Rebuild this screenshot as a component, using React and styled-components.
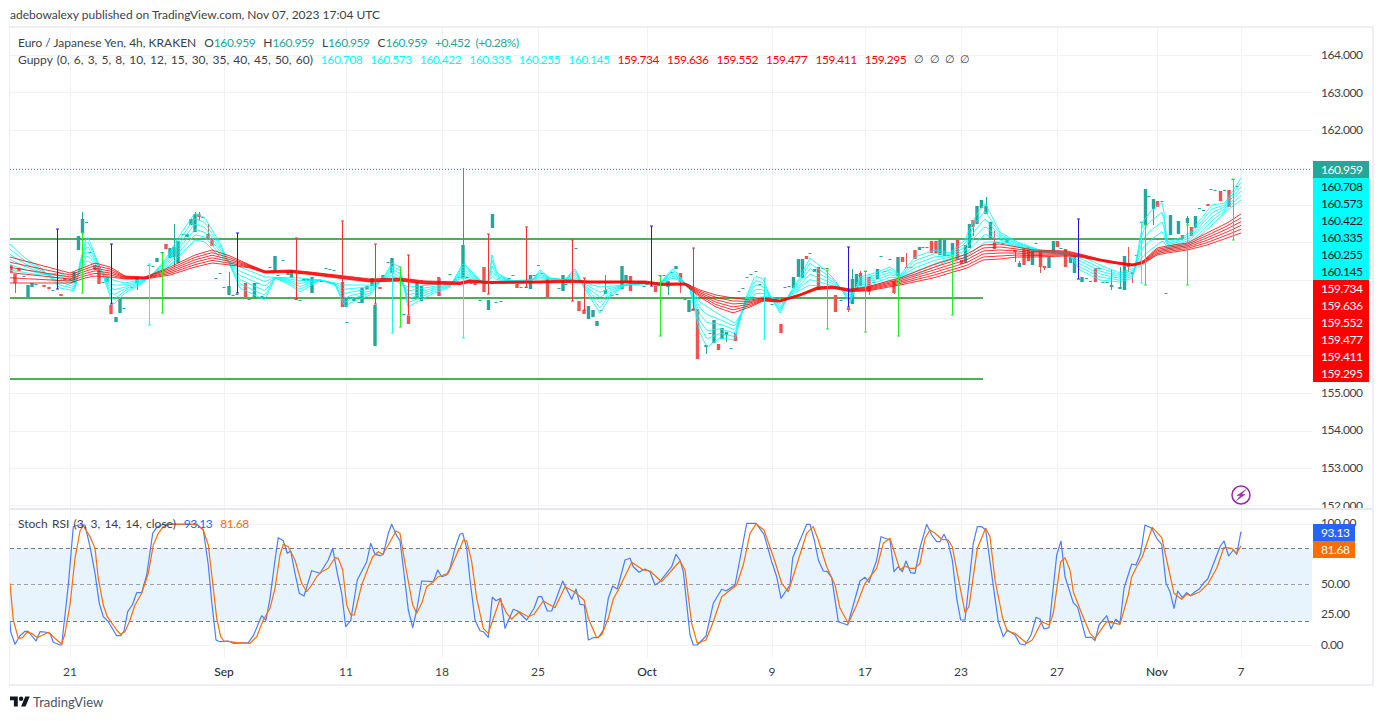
import React from "react";
import styled, { createGlobalStyle } from "styled-components";

const TEAL = "#26a69a";
const RED = "#ef5350";
const GRID = "#f0f2f6";

const GlobalStyle = createGlobalStyle`
  html, body {
    margin: 0;
    background: #fff;
    font-family: Lato, "Open Sans", sans-serif;
  }
`;

const Page = styled.div`
  width: 1383px;
  height: 721px;
  overflow: hidden;
  background: #fff;
`;

const Byline = styled.div`
  height: 26px;
  padding: 0 0 0 10px;
  line-height: 29px;
  font-size: 12px;
  color: #3c3f48;
`;

const Frame = styled.div`
  width: 1365px;
  margin-left: 9px;
  border: 2px solid #eeeff4;
  border-left-width: 1px;
  display: grid;
  grid-template-columns: 1302px 60px;
  grid-template-rows: 482px 148px 26px;
  box-sizing: border-box;
  height: 660px;
`;

const Pane = styled.div`
  position: relative;
  border-bottom: ${(p) => (p.$split ? "2px solid #e6e7ef" : "none")};
`;

const Chart = styled.svg`
  display: block;
  width: 1302px;
  height: ${(p) => p.$h}px;
`;

const Legend = styled.div`
  position: absolute;
  left: 8px;
  top: ${(p) => p.$top}px;
  font-size: 12px;
  line-height: 17px;
  color: #3c3f48;
  white-space: nowrap;
`;

const LegendRow = styled.div`
  display: flex;
  gap: 8px;
`;

const Title = styled.span`
  word-spacing: ${(p) => p.$ws || 0}px;
`;

const Val = styled.span`
  color: ${(p) => p.$c || "inherit"};
  letter-spacing: -0.45px;
  word-spacing: 3px;
`;

const Empty = styled.span`
  display: inline-block;
  width: 7.3px;
  font-size: 10.5px;
`;

const PriceAxis = styled.div`
  position: relative;
  padding-top: 8px;
  height: 472px;
  overflow: hidden;
  border-bottom: 2px solid #e6e7ef;
`;

const AxisRow = styled.div`
  height: ${(p) => p.$h}px;
  line-height: ${(p) => p.$h}px;
  padding-left: 9px;
  font-size: 12px;
  letter-spacing: -0.45px;
  color: #3c3f48;
`;

const TagStack = styled.div`
  position: absolute;
  left: 1px;
  top: 133px;
  display: flex;
  flex-direction: column;
`;

const Tag = styled.div`
  width: ${(p) => p.$w}px;
  height: 17px;
  line-height: 17px;
  padding-left: 8px;
  box-sizing: border-box;
  font-size: 12px;
  letter-spacing: -0.45px;
  background: ${(p) => p.$bg};
  color: ${(p) => p.$fg};
`;

const RsiAxis = styled.div`
  position: relative;
  margin-top: -2px;
`;

const RsiTags = styled(TagStack)`
  top: 16px;
`;

const TimeAxis = styled.div`
  grid-column: 1 / 3;
  position: relative;
  font-size: 12px;
  color: #3c3f48;
`;

const TimeTick = styled.span.attrs((p) => ({ style: { left: p.$x - 10 } }))`
  position: absolute;
  top: 6px;
  line-height: 16px;
  transform: translateX(-50%);
  font-weight: ${(p) => (p.$bold ? 500 : 400)};
  color: ${(p) => (p.$bold ? "#2a2e39" : "#3c3f48")};
`;

const Footer = styled.div`
  display: flex;
  align-items: center;
  gap: 3px;
  padding: 8px 0 0 10px;
  font-size: 13px;
  color: #50535e;
`;

// grid
const vGrid = [70, 224, 346, 442, 538, 647, 772, 865, 961, 1057, 1157, 1241];
const priceGrid = [55, 92, 130, 168, 205, 242, 280, 318, 355, 393, 431, 468, 505];
const rsiGrid = [524, 554, 585, 615, 645];
const crisp = (v) => Math.floor(v) + 0.5;

// key points read off the picture, [x, y]
const cyanFast = [[10,244],[25,258],[40,267],[60,288],[75,291],[80,262],[87,235],[100,267],[113,305],[125,293],[140,285],[150,277],[165,260],[180,235],[195,213],[205,218],[220,243],[240,288],[265,300],[275,278],[290,285],[300,292],[320,280],[335,285],[345,307],[350,303],[370,295],[385,275],[392,263],[400,267],[408,307],[430,295],[450,287],[463,263],[480,280],[488,282],[492,255],[497,273],[510,280],[530,283],[540,270],[550,278],[565,280],[575,268],[585,290],[600,313],[610,297],[625,285],[640,283],[660,283],[673,268],[690,290],[700,333],[707,347],[720,338],[735,340],[745,300],[755,276],[763,279],[770,296],[780,313],[790,293],[800,277],[810,258],[825,270],[835,280],[850,303],[860,277],[875,273],[890,267],[900,275],[915,257],[935,250],[950,253],[965,240],[975,217],[985,203],[1000,232],[1017,242],[1040,250],[1067,252],[1080,270],[1100,280],[1120,282],[1133,278],[1143,222],[1150,212],[1163,202],[1167,242],[1180,238],[1190,233],[1200,220],[1212,205],[1225,203],[1241,178]];
const cyanSlow = [[10,270],[40,275],[60,273],[75,281],[87,260],[100,270],[113,280],[125,283],[140,280],[165,270],[195,240],[205,242],[220,257],[240,267],[265,277],[300,278],[320,280],[345,285],[370,285],[390,278],[408,287],[430,285],[450,283],[463,278],[480,282],[510,281],[540,279],[575,280],[600,287],[625,285],[660,283],[673,278],[690,285],[700,302],[720,315],[735,323],[745,308],[755,298],[770,296],[780,302],[800,290],[810,285],[825,287],[850,290],[860,287],[875,285],[890,280],[915,275],[935,267],[950,260],[965,258],[985,242],[1000,242],[1017,247],[1040,252],[1067,255],[1080,255],[1100,265],[1120,273],[1143,265],[1163,250],[1190,245],[1212,225],[1225,212],[1241,200]];
const redTop = [[10,257],[40,265],[70,273],[85,267],[95,263],[110,267],[125,276],[145,277],[170,267],[195,255],[212,250],[230,256],[250,265],[265,271],[290,270],[310,272],[345,276],[370,279],[400,278],[425,281],[460,282],[470,280],[490,281.5],[540,281],[570,280],[590,281],[625,281],[645,281],[660,283],[685,283],[700,290],[716,295],[733,298],[750,300],[763,298],[780,300],[800,294],[817,287],[833,286],[850,289],[867,287],[900,278],[933,265],[967,254],[983,245],[1000,244],[1017,247],[1033,250],[1067,251],[1080,254],[1100,259],[1117,262],[1133,264],[1143,261],[1157,248],[1167,246],[1187,243],[1207,233],[1227,223],[1241,214]];
const redBot = [[10,283],[40,283],[70,283],[85,278],[95,276],[110,277],[125,279],[145,279],[170,275],[195,267],[212,263],[230,265],[250,268],[265,273],[290,272.5],[310,274.5],[345,279],[370,282],[400,281],[425,284],[460,284.5],[470,282.5],[490,283.5],[540,283],[570,282.5],[590,283],[625,283],[645,283.5],[660,285.5],[685,285],[700,297],[716,307],[733,313],[750,307],[763,301],[780,302],[800,296],[817,289.5],[833,288.5],[850,291.5],[867,291],[900,285],[933,278],[967,268],[983,260],[1000,259],[1017,257],[1033,257],[1067,256],[1080,257],[1100,261],[1117,264],[1133,266],[1143,263.5],[1157,255],[1167,253],[1187,250],[1207,245],[1227,238],[1241,233]];

// x, top, bottom, colour, optional wick top, wick bottom
const candles = [
  [11,265,272,"r"],[15,274,283,"r",274,293],[19,268,271,"r"],[28,285,297,"g"],[32,283,287,"g"],[44,285,287,"r"],[49,287,289,"r"],[61,294,296,"r"],
  [65,278,280,"g"],[70,279,281,"g"],[74,272,283,"g"],[78.5,236,250,"g"],[82.5,219,233,"g",212,233],[95,265,270,"g"],[99,267,284,"r"],[107,277,282,"g"],
  [111,305,314,"r"],[116,317,322,"g"],[120,298,313,"g"],[137,277,283,"g",277,290],[157,258,262,"g"],[166,244,249,"r"],[170,248,258,"g"],[174,247,257,"g",224,267],
  [178,241,263,"g"],[187,234,237,"g"],[191,219,225,"g"],[195,214,232,"g",212,232],[199,214,217,"r",212,220],[208,234,238,"r",224,238],[212,238,246,"r"],
  [229,286,295,"g",272,295],[245.5,283,297,"r"],[254.5,283,298,"g"],[275,256,271,"g"],[288,272,275,"g"],[291.5,270,278,"g"],[296,298,300,"r"],[304,279,281,"g"],
  [308,279,281,"g"],[312,277,293,"g"],[342.5,282,307,"r"],[346,297,307,"g"],[354,298,301,"g"],[362,288,303,"g"],[367,286,289,"g"],[372,278,286,"g"],[375,305,346,"g"],
  [380,287,289,"r"],[383,275,279,"g"],[392,258,273,"g"],[408.5,316,324,"r"],[417,282,297,"g"],[421.5,286,301,"g"],[439,278,296,"r"],[463,245,278,"g",168,278],
  [475,283,285,"r"],[484,267,292,"r"],[488.5,300,310,"g"],[492.5,214,228,"g"],[517,284,288,"r"],[530.5,275,289,"g"],[547.5,279,297,"r"],[563,275,291,"g"],
  [579,301,311,"r"],[584,310,314,"r"],[588.5,306,319,"g"],[593,310,317,"g"],[597,321,326,"g"],[605.5,290,294,"g",275,294],[622,266,289,"g"],[626,275,283,"g"],
  [630.5,276,291,"r"],[655.5,286,292,"r"],[668,281,287,"g",281,295],[676,266,269,"g"],[680.5,273,282,"r",273,293],[689,300,312,"g"],[693,309,311,"r"],[697.5,309,359,"r"],
  [706,345,347,"g",345,354],[714,320,343,"g"],[718.5,344,350,"r"],[722,328,339,"g"],[726.5,332,335,"g",332,342],[735.5,333,341,"r"],[781,324,333,"r"],
  [793.5,277,288,"g"],[798.5,259,277,"g"],[802.5,259,278,"g"],[806.5,256,259,"r"],[814.5,269,272,"g"],[818.5,267,290,"r"],[835.5,295,312,"r"],[848.5,308,310,"r",308,312],
  [852.5,279,304,"g",269,304],[856.5,274,290,"g"],[860.5,273,286,"r",271,286],[869,277,292,"r",277,295],[877.5,269,279,"g"],[894,281,293,"r",281,294],[898,257,276,"g"],
  [902.5,257,262,"r"],[906.5,267,268,"r",253,268],[915,250,259,"r"],[919.5,247,250,"g"],[931.5,241,253,"r"],[936,241,253,"r"],[940,239,255,"g"],[944.5,240,256,"g"],
  [952.5,243,255,"g"],[957.5,240,260,"r"],[961.5,260,264,"r"],[965.5,245,263,"g"],[969.5,224,248,"g"],[973,220,227,"r",220,236],[977,206,224,"g"],[981.5,200,208,"g"],
  [986,206,214,"g",197,214],[990.5,222,239,"g"],[994.5,242,249,"r",231,249],[1007,238,243,"g"],[1015,250,252,"r",250,262],[1019.5,263,267,"g",261,267],[1024,248,265,"r"],
  [1028.5,247,261,"r"],[1032.5,250,265,"g"],[1040.5,250,267,"r",250,273],[1044.5,266,268,"r",266,270],[1049,257,268,"g"],[1053.5,241,254,"g"],[1057.5,241,247,"r"],
  [1065.5,249,267,"r"],[1070.5,257,263,"g"],[1074.5,255,273,"g"],[1082,277,282,"g"],[1095.5,268,282,"r"],[1111.5,285,287,"g",270,290],[1120,287,289,"g",267,289],
  [1124.5,256,290,"g"],[1128.5,263,267,"r",247,272],[1132.5,272,274,"r",272,283],[1145.5,189,225,"g"],[1153.5,199,209,"g",199,225],[1157.5,201,207,"r"],
  [1170.5,215,235,"g"],[1178.5,221,234,"g"],[1182.5,235,239,"r"],[1187.5,218,223,"g",216,225],[1191.5,227,236,"r"],[1195.5,216,228,"g"],[1208,204,206,"r"],
  [1220.5,191,201,"r"],[1229,190,207,"r"],
];

// flat candles, [x, y]
const dashes = [
  [24,276],[36,284],[53,290],[86.5,222],[90,252],[103,282],[124,308],[132,287],[149,265],[153,266],[162,252],[183,234],[203,217],[216,278],[220,273],[224,287],
  [233,295],[237,294],[249,299],[258,283],[262,296],[266,298],[270,267],[278,275],[283,260],[300,300],[321,281],[326,268],[330,269],[334,270],[347,322],[359,302],
  [388,262],[404,314],[429,283],[438.5,277],[447,283],[450,274],[455,279],[459,277],[467,277],[471,283],[480,300],[496,302],[501,301],[509,278],[513,275],[521,287],
  [526,287],[534,275],[538.5,265],[542,273],[551,282],[555,278],[559,288],[566,284],[576,248],[601,310],[612,295],[617,294],[636,283],[640,282],[644,286],[647,284],
  [660,275],[664,275],[672,272],[685,299],[710,333],[731,348],[739,291],[743,288],[747,277],[751,274],[756,271],[760,284],[772,304],[777,298],[785,287],[789,286],
  [810,253],[823,268],[827,268],[841,300],[845,298],[865.5,271],[874,282],[881,256],[885,271],[890,259],[911,267],[923,247],[927,247],[948,255],[998,242],[1003,243],
  [1036,243],[1061,248],[1086.5,278],[1090.5,281],[1099,268],[1103,282],[1107,282],[1115.5,277],[1136.5,255],[1141.5,222],[1149,196],[1162,201],[1166,293],[1174.5,244],
  [1199.5,208],[1203.5,210],[1211,189],[1215,190],[1224.5,190],[1233,179],[1237,186],
];

// long capped lines
const BLUE = "#2a10e0";
const LIME = "#22f020";
const CY = "#20f8f0";
const RD = "#f83030";
const spikes = [
  [57.3,229,289,BLUE],[82.5,233,293,LIME],[111,244,304,BLUE],[149,264,325,CY],[162.5,253,313,LIME],[237.5,233,293,BLUE],[296.5,238,299,RD],[342.5,221,298,RD],
  [375.5,244,304,RD],[392.5,267,333,CY],[400.5,267,327,LIME],[408.5,255,315,RD],[463,278,338,CY],[488.5,234,294,RD],[526.5,227,287,RD],[572.3,240,301,RD],
  [584,278,310,RD],[651.5,226,286,BLUE],[660.5,276,336,LIME],[693.3,248,309,RD],[764.5,278,339,CY],[827.5,270,329,LIME],[848.5,247,307,BLUE],[865.5,271,332,LIME],
  [898.5,275,336,LIME],[952.5,256,315,LIME],[1078.5,219,279,BLUE],[1141.5,222,283,CY],[1145.5,225,285,LIME],[1187.5,225,285,LIME],[1233.5,179,240,LIME],
];

// stoch rsi traces, offset x then pairs at 3x
const part = (ox, pts) => pts.map(([x, y]) => [ox + x / 3, 505 + y / 3]);
const rsiBlue = [
  ...part(0, [[30,350],[32,380],[45,418],[60,392],[75,379],[85,379],[108,408],[120,380],[135,381],[150,385],[160,412],[180,420],[185,420],[205,240],[220,65],[235,60],[255,60],[270,125],[285,205],[298,295],[310,335],[325,350],[350,392],[362,392],[372,378],[383,320],[397,300],[410,263],[425,263],[440,210],[458,85],[470,67],[490,58],[590,58],[610,75],[625,180],[635,290],[648,405],[660,410],[685,408],[700,415],[745,413],[760,392],[785,332],[798,345],[810,280],[825,165],[835,98],[850,107],[862,145],[872,138],[885,205],[898,265],[912,273],[935,197],[960,205],[985,165],[998,130],[1012,205],[1025,265],[1037,365],[1052,347],[1072,225],[1100,170],[1112,115],[1125,148],[1140,152],[1150,148],[1165,85],[1175,58],[1190,92],[1200,107],[1212,205],[1225,315],[1238,368],[1250,315],[1265,228],[1300,230],[1313,195],[1325,215],[1340,210],[1350,190],[1365,130],[1378,92]]),
  ...part(460, [[0,88],[8,85],[20,130],[30,225],[45,345],[60,377],[70,380],[85,397],[97,277],[108,287],[122,280],[135,370],[160,313],[172,317],[200,345],[222,310],[235,275],[245,275],[262,318],[275,318],[308,228],[335,283],[348,252],[360,298],[373,300],[385,405],[400,398],[415,398],[430,375],[445,280],[458,243],[472,252],[495,165],[510,160],[520,185],[537,202],[555,192],[570,200],[585,240],[598,232],[635,185],[648,148],[660,165],[670,200],[690,390],[700,420],[712,420],[738,393],[760,295],[785,253],[798,258],[825,240],[845,135],[860,55],[888,55],[912,88],[935,170],[950,215],[963,280],[990,240],[998,158],[1040,58],[1050,58],[1063,105],[1075,165],[1090,198],[1102,200],[1115,218],[1135,350],[1163,360],[1200,228],[1215,217],[1227,232],[1250,165],[1263,95],[1290,105],[1302,200],[1315,185],[1327,200],[1338,168],[1352,203],[1365,205],[1380,128]]),
  ...part(920, [[20,58],[35,90],[50,110],[60,110],[72,88],[85,115],[97,165],[110,280],[122,345],[135,345],[160,115],[172,65],[185,65],[197,75],[210,170],[225,280],[235,350],[250,395],[262,375],[285,390],[300,417],[315,420],[333,390],[348,337],[360,342],[372,372],[387,368],[410,150],[423,108],[435,215],[460,293],[473,307],[497,397],[515,397],[525,407],[537,360],[560,332],[573,372],[587,343],[600,355],[612,250],[635,177],[648,180],[662,145],[675,60],[695,70],[710,100],[725,118],[738,235],[750,260],[762,310],[773,258],[787,278],[800,263],[812,272],[825,260],[837,253],[850,235],[863,222],[900,125],[912,108],[926,153],[940,135],[950,148],[963,80]]),
];
const rsiOrange = [
  ...part(0, [[30,235],[40,345],[55,400],[68,398],[80,382],[95,385],[112,398],[145,382],[185,418],[195,385],[210,300],[225,160],[240,78],[250,62],[270,95],[285,130],[295,220],[310,300],[322,335],[350,375],[362,388],[375,380],[390,345],[405,300],[425,265],[445,205],[460,120],[475,85],[490,65],[510,57],[590,58],[610,75],[625,120],[640,250],[650,340],[662,395],[672,408],[690,410],[710,413],[750,415],[770,395],[790,345],[810,310],[825,250],[840,150],[850,118],[865,125],[885,165],[905,235],[920,260],[935,240],[950,215],[965,200],[985,190],[1005,158],[1015,160],[1028,195],[1040,300],[1052,330],[1063,330],[1085,240],[1100,200],[1118,155],[1135,140],[1148,148],[1165,120],[1188,78],[1200,85],[1215,175],[1238,300],[1250,325],[1265,295],[1280,245],[1300,230],[1315,215],[1345,205],[1378,130]]),
  ...part(460, [[0,130],[10,105],[20,108],[35,170],[50,280],[70,370],[85,385],[120,283],[140,325],[155,342],[178,320],[205,335],[222,328],[250,288],[285,308],[315,245],[345,262],[372,285],[385,340],[410,398],[425,390],[445,340],[460,282],[475,255],[515,172],[550,195],[570,198],[605,230],[660,168],[675,195],[695,355],[712,415],[738,405],[760,350],[785,275],[830,240],[850,180],[870,85],[888,57],[912,75],[945,170],[965,235],[985,260],[1015,165],[1040,85],[1060,65],[1075,105],[1100,185],[1125,240],[1140,310],[1165,355],[1190,300],[1215,235],[1250,190],[1270,115],[1290,100],[1320,195],[1335,183],[1350,190],[1365,190],[1380,175]]),
  ...part(920, [[15,100],[30,75],[45,85],[65,103],[85,105],[97,125],[110,195],[135,322],[147,305],[172,130],[197,70],[210,95],[225,225],[248,340],[262,378],[285,385],[320,415],[337,405],[365,350],[388,360],[400,325],[422,170],[435,158],[450,195],[460,260],[487,330],[510,385],[525,400],[560,350],[600,358],[625,270],[635,215],[650,185],[667,155],[697,67],[725,97],[750,210],[762,265],[785,283],[800,268],[812,272],[840,260],[865,235],[890,190],[912,127],[935,130],[950,145],[963,122]]),
];

const at = (pts, x) => {
  for (let i = 1; i < pts.length; i++) {
    if (x <= pts[i][0]) {
      const [x0, y0] = pts[i - 1];
      const [x1, y1] = pts[i];
      return y0 + ((y1 - y0) * (x - x0)) / (x1 - x0);
    }
  }
  return pts[pts.length - 1][1];
};

const toPath = (pts) => pts.map(([x, y]) => `${x.toFixed(1)},${y.toFixed(1)}`).join(" ");

// six lines fanned out between two edges
const fan = (a, b, i, n = 6) => {
  const t = i / (n - 1);
  const pts = [];
  for (let x = 10; x <= 1241; x += 2) pts.push([x, at(a, x) * (1 - t) + at(b, x) * t]);
  pts.push([1241, at(a, 1241) * (1 - t) + at(b, 1241) * t]);
  return toPath(pts);
};

const fanLines = [0, 1, 2, 3, 4, 5];
const legendCyan = ["160.708", "160.573", "160.422", "160.335", "160.255", "160.145"];
const legendRed = ["159.734", "159.636", "159.552", "159.477", "159.411", "159.295"];
// the middle ticks sit behind the price tags
const priceTicks = ["164.000", "163.000", "162.000", "", "", "", "", "", "", "155.000", "154.000", "153.000", "152.000"];
const timeTicks = [[70,"21"],[224,"Sep",1],[346,"11"],[442,"18"],[538,"25"],[647,"Oct",1],[772,"9"],[865,"17"],[961,"23"],[1057,"27"],[1157,"Nov",1],[1241,"7"]];

const PriceChart = () => (
  <Chart $h={480} viewBox="10 28 1302 480">
    {vGrid.map((x) => <line key={x} x1={crisp(x)} x2={crisp(x)} y1={28} y2={508} stroke={GRID} />)}
    {priceGrid.map((y) => <line key={y} x1={10} x2={1312} y1={crisp(y)} y2={crisp(y)} stroke={GRID} />)}
    <line x1={10} x2={1312} y1={169.5} y2={169.5} stroke={TEAL} strokeDasharray="1 2" />
    <line x1={10} x2={1183} y1={239} y2={239} stroke="#4caf50" strokeWidth={2} />
    <line x1={10} x2={983} y1={298} y2={298} stroke="#4caf50" strokeWidth={2} />
    <line x1={10} x2={983} y1={379} y2={379} stroke="#4caf50" strokeWidth={2} />
    {candles.map(([x, t, b, c, wt, wb], i) => {
      const col = c === "g" ? TEAL : RED;
      return (
        <g key={i} fill={col} stroke={col}>
          {wt !== undefined && <line x1={crisp(x)} x2={crisp(x)} y1={wt} y2={wb} strokeWidth={1} />}
          <rect x={x - 1.7} y={t} width={3.4} height={b - t} stroke="none" />
        </g>
      );
    })}
    {dashes.map(([x, y], i) => <rect key={i} x={x - 1.5} y={y} width={3} height={1} fill={TEAL} />)}
    {fanLines.map((i) => (
      <polyline key={i} points={fan(cyanFast, cyanSlow, i)} fill="none" stroke="#00ffff" strokeOpacity={0.85} />
    ))}
    {fanLines.map((i) => (
      <polyline key={i} points={fan(redTop, redBot, i)} fill="none" stroke="#ff0000" strokeOpacity={0.8} />
    ))}
    {spikes.map(([x, a, b, c], i) => (
      <g key={i} stroke={c} strokeWidth={1}>
        <line x1={crisp(x)} x2={crisp(x)} y1={a} y2={b} />
        <line x1={crisp(x) - 1.5} x2={crisp(x) + 1.5} y1={a} y2={a} />
        <line x1={crisp(x) - 1.5} x2={crisp(x) + 1.5} y1={b} y2={b} />
      </g>
    ))}
    <circle cx={1241} cy={495} r={9} fill="#fff" stroke="#9c27b0" strokeWidth={1.5} />
    <path d="M1246 489.5 L1237 495.5 L1240.5 495.8 L1236.5 500.5 L1245 494.5 L1241.5 494.2 Z" fill="#9c27b0" stroke="#9c27b0" strokeWidth={0.5} strokeLinejoin="round" />
  </Chart>
);

const RsiChart = () => (
  <Chart $h={148} viewBox="10 510 1302 148">
    <rect x={10} y={548} width={1302} height={73} fill="#e7f3fd" />
    {vGrid.map((x) => <line key={x} x1={crisp(x)} x2={crisp(x)} y1={510} y2={658} stroke={GRID} />)}
    {rsiGrid.map((y) => <line key={y} x1={10} x2={1312} y1={crisp(y)} y2={crisp(y)} stroke={GRID} />)}
    <line x1={10} x2={1312} y1={548.5} y2={548.5} stroke="#787b86" strokeDasharray="4 3" />
    <line x1={10} x2={1312} y1={584.5} y2={584.5} stroke="#9a9da6" strokeDasharray="4 3" />
    <line x1={10} x2={1312} y1={621.5} y2={621.5} stroke="#787b86" strokeDasharray="4 3" />
    <polyline points={toPath(rsiBlue)} fill="none" stroke="#4a7dff" strokeWidth={1.2} strokeLinejoin="round" />
    <polyline points={toPath(rsiOrange)} fill="none" stroke="#ff6d00" strokeWidth={1.2} strokeLinejoin="round" />
  </Chart>
);

const TvMark = () => (
  <svg width="20" height="16" viewBox="0 0 36 28" fill="#131722">
    <path d="M14 22H7V11H0V4h14v18zM28 22h-8l7.5-18h8L28 22z" />
    <circle cx="20" cy="8" r="4" />
  </svg>
);

export default function App() {
  return (
    <Page>
      <GlobalStyle />
      <Byline>adebowalexy published on TradingView.com, Nov 07, 2023 17:04 UTC</Byline>
      <Frame>
        <Pane $split>
          <PriceChart />
          <Legend $top={6}>
            <LegendRow>
              <Title>Euro / Japanese Yen, 4h, KRAKEN</Title>
              <span>O<Val $c={TEAL}>160.959</Val></span>
              <span>H<Val $c={TEAL}>160.959</Val></span>
              <span>L<Val $c={TEAL}>160.959</Val></span>
              <span>C<Val $c={TEAL}>160.959</Val></span>
              <Val $c={TEAL}>+0.452 (+0.28%)</Val>
            </LegendRow>
            <LegendRow>
              <Title $ws={1.1}>Guppy (0, 6, 3, 5, 8, 10, 12, 15, 30, 35, 40, 45, 50, 60)</Title>
              {legendCyan.map((v) => <Val key={v} $c="#00ffff">{v}</Val>)}
              {legendRed.map((v) => <Val key={v} $c="#ff0000">{v}</Val>)}
              {[0, 1, 2, 3].map((i) => <Empty key={i}>∅</Empty>)}
            </LegendRow>
          </Legend>
        </Pane>
        <PriceAxis>
          {priceTicks.map((t, i) => <AxisRow key={i} $h={37.55}>{t}</AxisRow>)}
          <TagStack>
            <Tag $w={56} $bg={TEAL} $fg="#fff">160.959</Tag>
            {legendCyan.map((v) => <Tag key={v} $w={56} $bg="#00ffff" $fg="#131722">{v}</Tag>)}
            {legendRed.map((v) => <Tag key={v} $w={56} $bg="#ff0000" $fg="#fff">{v}</Tag>)}
          </TagStack>
        </PriceAxis>
        <Pane>
          <RsiChart />
          <Legend $top={5}>
            <LegendRow>
              <Title $ws={1.1}>Stoch RSI (3, 3, 14, 14, close)</Title>
              <Val $c="#2962ff">93.13</Val>
              <Val $c="#ff6d00">81.68</Val>
            </LegendRow>
          </Legend>
        </Pane>
        <RsiAxis>
          {["100.00", "75.00", "50.00", "25.00", "0.00"].map((t) => <AxisRow key={t} $h={30.4}>{t}</AxisRow>)}
          <RsiTags>
            <Tag $w={42} $bg="#2962ff" $fg="#fff">93.13</Tag>
            <Tag $w={42} $bg="#ff6d00" $fg="#fff">81.68</Tag>
          </RsiTags>
        </RsiAxis>
        <TimeAxis>
          {timeTicks.map(([x, t, b]) => <TimeTick key={t} $x={x} $bold={b}>{t}</TimeTick>)}
        </TimeAxis>
      </Frame>
      <Footer>
        <TvMark />
        <span>TradingView</span>
      </Footer>
    </Page>
  );
}
